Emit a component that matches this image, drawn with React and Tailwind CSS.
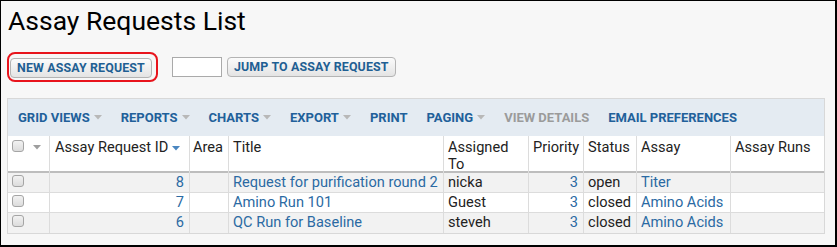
const menu = [
  { label: 'GRID VIEWS', caret: true },
  { label: 'REPORTS', caret: true },
  { label: 'CHARTS', caret: true },
  { label: 'EXPORT', caret: true },
  { label: 'PRINT' },
  { label: 'PAGING', caret: true },
  { label: 'VIEW DETAILS', disabled: true },
  { label: 'EMAIL PREFERENCES' },
];

const rows = [
  { id: 8, title: 'Request for purification round 2', to: 'nicka', priority: 3, status: 'open', assay: 'Titer' },
  { id: 7, title: 'Amino Run 101', to: 'Guest', priority: 3, status: 'closed', assay: 'Amino Acids' },
  { id: 6, title: 'QC Run for Baseline', to: 'steveh', priority: 3, status: 'closed', assay: 'Amino Acids' },
];

const cols = 'grid grid-cols-[41px_140px_39px_215px_85px_55px_53px_94px_94px]';

function Caret({ color = '#b8b8b8' }) {
  return (
    <svg width="8" height="5" viewBox="0 0 8 5" className="block shrink-0">
      <polygon points="0,0 8,0 4,4.5" fill={color} />
    </svg>
  );
}

function Checkbox() {
  return (
    <span className="block h-[12px] w-[12px] rounded-[3px] border border-[#a5a5a5] bg-gradient-to-b from-[#f2f2f2] to-[#dcdcdc]" />
  );
}

function Button({ children }) {
  return (
    <button className="block h-[20px] rounded-[4px] border border-[#b4b4b4] bg-gradient-to-b from-[#fbfbfb] to-[#e4e4e4] px-[6px] text-[12.4px] font-bold leading-[18px] tracking-[0.15px] text-[#1f5f93]">
      {children}
    </button>
  );
}

export default function App() {
  return (
    <div className="h-[247px] w-[837px] overflow-hidden border-t border-l border-r-2 border-b-2 border-black bg-[#f7f7f7] font-['Roboto',sans-serif] text-[#222]">
      <h1 className="pl-[7px] pt-[5px] text-[26.5px] font-normal leading-[30px] text-black">Assay Requests List</h1>

      <div className="mt-[16px] flex items-start pl-[6px]">
        <div className="flex rounded-[8px] border-2 border-[#e8141c] pb-[2px] pl-[1px] pr-[4px] pt-[4px]">
          <Button>NEW ASSAY REQUEST</Button>
        </div>
        <input className="ml-[14px] mt-[5px] block h-[20px] w-[50px] border border-[#aaa] bg-white" />
        <div className="ml-[5px] mt-[5px] flex">
          <Button>JUMP TO ASSAY REQUEST</Button>
        </div>
      </div>

      <div className="ml-[6px] mt-[16px] w-[818px] border border-[#d8d8d8]">
        <div className="flex h-[37px] items-center gap-[19px] bg-[#e4ebf2] pl-[10px]">
          {menu.map((m) => (
            <span
              key={m.label}
              className={`flex items-center gap-[4px] text-[13px] font-bold ${m.disabled ? 'text-[#9b9b9b]' : 'text-[#21609a]'}`}
            >
              {m.label}
              {m.caret && <Caret />}
            </span>
          ))}
        </div>

        <div className={`${cols} h-[37px] border-b-2 border-[#bdbdbd] bg-white text-[14.6px] leading-[17px]`}>
          <div className="flex items-start gap-[9px] pl-[4px] pt-[4px]">
            <Checkbox />
            <span className="mt-[5px]"><Caret color="#9e9e9e" /></span>
          </div>
          <div className="flex items-start gap-[4px] border-l border-[#dcdcdc] pl-[5px] pt-[3px]">
            Assay Request ID
            <span className="mt-[7px]"><Caret color="#4a86c0" /></span>
          </div>
          <div className="border-l border-[#dcdcdc] pl-[3px] pt-[3px]">Area</div>
          <div className="border-l border-[#dcdcdc] pl-[4px] pt-[3px]">Title</div>
          <div className="border-l border-[#dcdcdc] pl-[4px] pt-[3px]">Assigned<br />To</div>
          <div className="border-l border-[#dcdcdc] pl-[4px] pt-[3px]">Priority</div>
          <div className="border-l border-[#dcdcdc] pl-[4px] pt-[3px]">Status</div>
          <div className="border-l border-[#dcdcdc] pl-[4px] pt-[3px]">Assay</div>
          <div className="border-l border-[#dcdcdc] pl-[4px] pt-[3px]">Assay Runs</div>
        </div>

        {rows.map((r, i) => (
          <div
            key={r.id}
            className={`${cols} h-[20px] text-[14.6px] leading-[19px] ${i < rows.length - 1 ? 'border-b border-[#dcdcdc]' : ''} ${i % 2 === 0 ? 'bg-[#f2f2f2]' : 'bg-white'}`}
          >
            <div className="pl-[4px] pt-[2px]"><Checkbox /></div>
            <div className="border-l border-[#dcdcdc] pr-[5px] text-right text-[#2b6aa3]">{r.id}</div>
            <div className="border-l border-[#dcdcdc]" />
            <div className="truncate border-l border-[#dcdcdc] pl-[4px] text-[#2b6aa3]">{r.title}</div>
            <div className="border-l border-[#dcdcdc] pl-[4px]">{r.to}</div>
            <div className="border-l border-[#dcdcdc] pr-[5px] text-right text-[#2b6aa3]">{r.priority}</div>
            <div className="border-l border-[#dcdcdc] pl-[4px]">{r.status}</div>
            <div className="border-l border-[#dcdcdc] pl-[4px] text-[#2b6aa3]">{r.assay}</div>
            <div className="border-l border-[#dcdcdc]" />
          </div>
        ))}
      </div>
    </div>
  );
}
